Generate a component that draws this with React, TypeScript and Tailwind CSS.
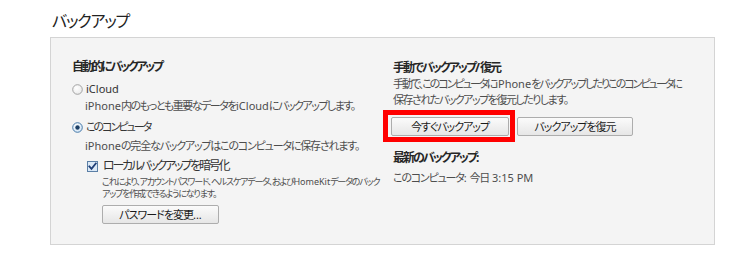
import React from "react";

const font = "font-['Noto_Sans','Noto_Sans_CJK_JP',sans-serif] [font-feature-settings:'palt']";

function J({ t, tr }: { t: string; tr: string }) {
  const parts = t.split(/([\x20-\x7E]+)/).filter((p) => p.length > 0);
  return (
    <>
      {parts.map((p, i) =>
        /^[\x20-\x7E]+$/.test(p) ? (
          <span key={i}>{p}</span>
        ) : (
          <span key={i} className={tr}>
            {p}
          </span>
        )
      )}
    </>
  );
}

function Btn({ children, className = "" }: { children: React.ReactNode; className?: string }) {
  return (
    <div
      className={`h-[19px] flex items-center justify-center rounded-[2px] border border-[#adadad] bg-gradient-to-b from-[#fbfbfb] to-[#e6e6e6] text-[11px] leading-[14px] text-[#1a1a1a] whitespace-nowrap ${className}`}
    >
      {children}
    </div>
  );
}

function Radio({ checked }: { checked?: boolean }) {
  return (
    <svg width="11" height="11" viewBox="0 0 11 11" className="shrink-0">
      <defs>
        <radialGradient id={checked ? "rg1" : "rg0"} cx="0.4" cy="0.35" r="0.7">
          <stop offset="0" stopColor="#ffffff" />
          <stop offset="1" stopColor={checked ? "#cfe3f5" : "#e9e9e9"} />
        </radialGradient>
      </defs>
      <circle cx="5.5" cy="5.5" r="4.8" fill={`url(#${checked ? "rg1" : "rg0"})`} stroke={checked ? "#3a6fa2" : "#9a9a9a"} strokeWidth="0.9" />
      {checked && <circle cx="5.5" cy="5.5" r="2.2" fill="#1c3f66" />}
    </svg>
  );
}

function Check() {
  return (
    <svg width="11" height="11" viewBox="0 0 11 11" className="shrink-0">
      <rect x="0.5" y="0.5" width="10" height="10" fill="#dbe9f7" stroke="#5b7fa6" strokeWidth="1" />
      <path d="M2.3 5.4 L4.5 7.9 L8.8 2.4" fill="none" stroke="#1f3f78" strokeWidth="1.8" strokeLinecap="square" />
    </svg>
  );
}

export default function App() {
  return (
    <div className={`w-[750px] h-[262px] bg-white whitespace-nowrap ${font}`}>
      <div className="pl-[52px] pt-[11px] text-[16px] leading-[20px] text-[#222]">
        <J t="バックアップ" tr="tracking-[-1.2px]" />
      </div>
      <div className="ml-[50px] mt-[6px] w-[665px] h-[208px] border border-[#d4d4d4] bg-[#f4f4f4] flex">
        <div className="w-[342px] pl-[21px] pt-[22px] flex flex-col items-start">
          <div className="text-[12px] leading-[14px] font-bold text-[#262626]">
            <J t="自動的にバックアップ" tr="tracking-[-2.3px]" />
          </div>
          <div className="mt-[7px] h-[16px] flex items-center gap-[3px] text-[11px] leading-[16px] text-[#333]">
            <Radio />
            <span>iCloud</span>
          </div>
          <div className="mt-[1px] pl-[13px] text-[11px] leading-[16px] text-[#4d4d4d]">
            <J t="iPhone内のもっとも重要なデータをiCloudにバックアップします。" tr="tracking-[-1.5px]" />
          </div>
          <div className="mt-[5px] h-[16px] flex items-center gap-[3px] text-[11px] leading-[16px] text-[#333]">
            <Radio checked />
            <span>
              <J t="このコンピュータ" tr="tracking-[-2px]" />
            </span>
          </div>
          <div className="mt-[3px] pl-[13px] text-[11px] leading-[16px] text-[#4d4d4d]">
            <J t="iPhoneの完全なバックアップはこのコンピュータに保存されます。" tr="tracking-[-1.2px]" />
          </div>
          <div className="mt-[4px] pl-[15px] h-[16px] flex items-center gap-[5px] text-[12px] leading-[16px] text-[#333]">
            <Check />
            <span>
              <J t="ローカルバックアップを暗号化" tr="tracking-[-2.2px]" />
            </span>
          </div>
          <div className="mt-[2px] pl-[30px] text-[9px] leading-[12px] text-[#4d4d4d]">
            <div>
              <J t="これにより、アカウントパスワード、ヘルスケアデータ、およびHomeKitデータのバック" tr="tracking-[-1.2px]" />
            </div>
            <div>
              <J t="アップを作成できるようになります。" tr="tracking-[-1.2px]" />
            </div>
          </div>
          <Btn className="mt-[5px] ml-[30px] w-[117px]">
            <J t="パスワードを変更..." tr="tracking-[-1px]" />
          </Btn>
        </div>
        <div className="flex-1 pt-[22px] flex flex-col items-start">
          <div className="text-[12px] leading-[16px] font-bold text-[#262626]">
            <J t="手動でバックアップ/復元" tr="tracking-[-2px]" />
          </div>
          <div className="text-[11px] leading-[16px] text-[#4d4d4d]">
            <div>
              <J t="手動で、このコンピュータにiPhoneをバックアップしたりこのコンピュータに" tr="tracking-[-2px]" />
            </div>
            <div>
              <J t="保存されたバックアップを復元したりします。" tr="tracking-[-1.5px]" />
            </div>
          </div>
          <div className="mt-[9px] ml-[-2px] flex gap-[8px]">
            <div className="relative">
              <Btn className="w-[118px]">
                <J t="今すぐバックアップ" tr="tracking-[-1px]" />
              </Btn>
              <div className="absolute left-[-8px] top-[-7px] right-[-6px] bottom-[-6px] border-[5px] border-[#f00]" />
            </div>
            <Btn className="w-[116px]">
              <J t="バックアップを復元" tr="tracking-[-1px]" />
            </Btn>
          </div>
          <div className="mt-[14px] text-[12px] leading-[16px] font-bold text-[#262626]">
            <J t="最新のバックアップ:" tr="tracking-[-2px]" />
          </div>
          <div className="mt-[4px] text-[11px] leading-[16px] text-[#4d4d4d]">
            <J t="このコンピュータ: 今日 3:15 PM" tr="tracking-[-1.2px]" />
          </div>
        </div>
      </div>
    </div>
  );
}
